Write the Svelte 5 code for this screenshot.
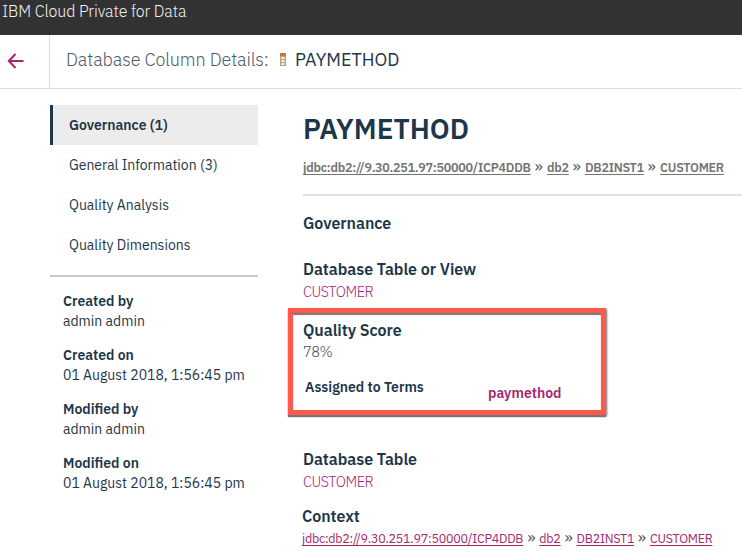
<script>
  const nav = [
    { label: 'Governance (1)', active: true },
    { label: 'General Information (3)' },
    { label: 'Quality Analysis' },
    { label: 'Quality Dimensions' },
  ];
  const meta = [
    ['Created by', 'admin admin'],
    ['Created on', '01 August 2018, 1:56:45 pm'],
    ['Modified by', 'admin admin'],
    ['Modified on', '01 August 2018, 1:56:45 pm'],
  ];
  const path = [
    { label: 'jdbc:db2://9.30.251.97:50000/ICP4DDB', top: 227, bottom: 221 },
    { label: 'db2', top: 21, bottom: 21 },
    { label: 'DB2INST1', top: 58, bottom: 57 },
    { label: 'CUSTOMER', top: 63, bottom: 62 },
  ];
</script>

{#snippet crumbs(kind)}
  <div class="crumbs {kind}">
    {#each path as item, i}
      {#if i > 0}<span class="sep">»</span>{/if}
      <span class="crumb" style="width: {item[kind]}px">{item.label}</span>
    {/each}
  </div>
{/snippet}

<div class="page">
  <header><span>IBM Cloud Private for Data</span></header>
  <div class="titlebar">
    <div class="back">
      <svg width="17" height="16" viewBox="0 0 17 16" fill="none" stroke="#a6266e" stroke-width="2">
        <path d="M8.5 1 L1.8 8 L8.5 15 M2 8 H16.5" />
      </svg>
    </div>
    <div class="title">
      <span class="kind">Database Column Details:</span>
      <svg class="col" width="6" height="13" viewBox="0 0 6 13">
        <rect width="6" height="13" rx="0.6" fill="#b8a478" />
        <rect width="6" height="3" fill="#c9782f" />
        <path d="M1.5 4h3v2h-3zM1.5 7h3v2h-3zM1.5 10h3v2h-3z" fill="#f3f3ed" />
      </svg>
      <span class="name">PAYMETHOD</span>
    </div>
  </div>
  <div class="body">
    <aside>
      <nav>
        {#each nav as item}
          <div class="item" class:active={item.active}>{item.label}</div>
        {/each}
      </nav>
      <dl>
        {#each meta as [key, value]}
          <dt>{key}</dt>
          <dd>{value}</dd>
        {/each}
      </dl>
    </aside>
    <main>
      <h1>PAYMETHOD</h1>
      {@render crumbs('top')}
      <hr />
      <h2 class="section">Governance</h2>
      <h2 class="table-view">Database Table or View</h2>
      <p class="link">CUSTOMER</p>
      <div class="score">
        <div class="frame"></div>
        <h2 class="quality">Quality Score</h2>
        <p class="percent">78%</p>
        <div class="terms">
          <span class="assigned">Assigned to Terms</span>
          <span class="term">paymethod</span>
        </div>
      </div>
      <h2 class="table">Database Table</h2>
      <p class="link">CUSTOMER</p>
      <h2 class="context">Context</h2>
      {@render crumbs('bottom')}
    </main>
  </div>
</div>

<style>
  .page {
    width: 742px;
    height: 559px;
    overflow: hidden;
    background: #fff;
    color: #1d3649;
    font-family: 'IBM Plex Sans', Roboto, sans-serif;
    font-size: 14px;
    white-space: nowrap;
  }
  header {
    height: 35px;
    background: #323232;
    color: #f2f2f2;
    font-size: 16px;
    font-weight: 300;
    line-height: 22px;
    letter-spacing: -0.1px;
    padding-left: 2px;
    box-sizing: border-box;
  }
  .titlebar {
    display: flex;
    height: 54px;
    box-sizing: border-box;
    border-bottom: 1px solid #dedede;
  }
  .back {
    width: 50px;
    box-sizing: border-box;
    border-right: 1px solid #dedede;
    padding: 18px 0 0 7px;
  }
  .title {
    display: flex;
    align-items: center;
    padding: 0 0 4px 16px;
    font-size: 18px;
  }
  .kind { width: 214px; font-weight: 300; color: #4d5c67; letter-spacing: -0.12px; }
  .col { width: 6px; margin-right: 9px; }
  .body { display: flex; }
  aside { width: 208px; padding: 16px 0 0 50px; }
  nav { padding-bottom: 10px; border-bottom: 2px solid #c8c8c8; }
  .item { height: 40px; line-height: 40px; padding-left: 19px; }
  .active {
    background: #ececec;
    border-left: 3px solid #1d3649;
    padding-left: 16px;
    font-weight: 600;
  }
  dl { margin: 14px 0 0 13px; line-height: 20px; }
  dt { font-weight: 600; }
  dd { margin: 0 0 14px; }
  main { width: 439px; padding: 22px 0 0 45px; }
  h1 { margin: 0; font-size: 28px; line-height: 36px; font-weight: 600; }
  h2 { margin: 0; font-size: 16px; line-height: 20px; font-weight: 600; letter-spacing: -0.03px; }
  p { margin: 0; }
  hr { margin: 17px 0 0; border: 0; height: 2px; background: #e0e0e0; }
  .crumbs { display: flex; font-size: 12.5px; line-height: 20px; letter-spacing: -0.25px; }
  .crumb { text-decoration: underline; text-underline-offset: 2px; }
  .top { margin-top: 10px; color: #747474; font-weight: 600; }
  .bottom { margin: 2px 0 0 -1px; color: #a6266e; }
  .sep { width: 17px; text-align: center; font-size: 16px; line-height: 18px; font-weight: 400; color: #555; }
  .bottom .sep { width: 16.3px; }
  .section { margin-top: 17px; }
  .table-view { margin-top: 26px; }
  .link { font-size: 14.5px; letter-spacing: -0.45px; line-height: 20px; margin-top: 3px; font-weight: 300; color: #a6266e; }
  .score { position: relative; margin-top: 18px; }
  .frame {
    position: absolute;
    left: -15px;
    top: -12px;
    width: 308px;
    height: 97px;
    border: 5px solid #ff594c;
    box-shadow: 0 2px 1px #777, inset 0 2px 1px #777, 1px 1px 2px #777;
  }
  .percent { font-size: 14.5px; letter-spacing: -0.5px; line-height: 20px; margin-top: 2px; font-weight: 300; color: #3c4852; }
  .terms { display: flex; padding: 15px 0 0 2px; line-height: 20px; font-weight: 600; }
  .assigned { width: 183px; }
  .term { padding-top: 6px; color: #a6266e; }
  .table { margin-top: 46px; }
  .context { margin: 14px 0 0 -1px; }
</style>
